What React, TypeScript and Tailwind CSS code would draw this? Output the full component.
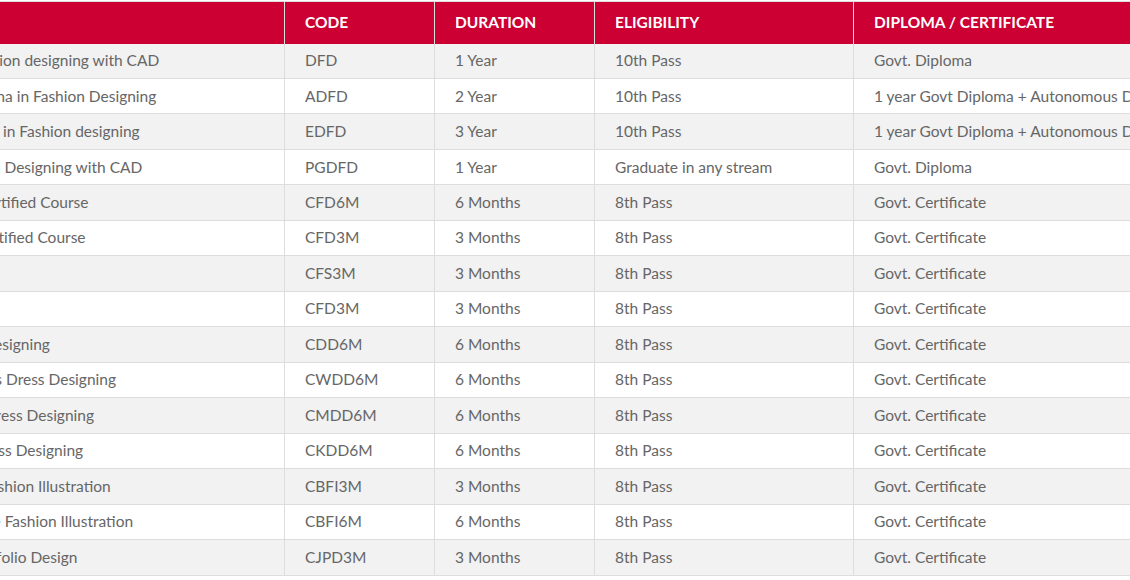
import React from "react";

type Row = {
  prefix: string;
  rest: string;
  start: string;
  code: string;
  duration: string;
  eligibility: string;
  diploma: string;
};

const rows: Row[] = [
  { prefix: "Diploma in Fashi", rest: "on designing with CAD", start: "w-[3px]", code: "DFD", duration: "1 Year", eligibility: "10th Pass", diploma: "Govt. Diploma" },
  { prefix: "Advance Diplom", rest: "a in Fashion Designing", start: "w-[5px]", code: "ADFD", duration: "2 Year", eligibility: "10th Pass", diploma: "1 year Govt Diploma + Autonomous Diploma" },
  { prefix: "Expert Diploma ", rest: "in Fashion designing", start: "w-[3px]", code: "EDFD", duration: "3 Year", eligibility: "10th Pass", diploma: "1 year Govt Diploma + Autonomous Diploma" },
  { prefix: "PG Diploma in Fashion ", rest: "Designing with CAD", start: "w-[4.5px]", code: "PGDFD", duration: "1 Year", eligibility: "Graduate in any stream", diploma: "Govt. Diploma" },
  { prefix: "Fashion Designing Cer", rest: "tified Course", start: "w-[1px]", code: "CFD6M", duration: "6 Months", eligibility: "8th Pass", diploma: "Govt. Certificate" },
  { prefix: "Fashion Design Cert", rest: "ified Course", start: "w-[4px]", code: "CFD3M", duration: "3 Months", eligibility: "8th Pass", diploma: "Govt. Certificate" },
  { prefix: "Certificate in Stitching", rest: "", start: "w-[0px]", code: "CFS3M", duration: "3 Months", eligibility: "8th Pass", diploma: "Govt. Certificate" },
  { prefix: "Certificate in Fashion", rest: "", start: "w-[0px]", code: "CFD3M", duration: "3 Months", eligibility: "8th Pass", diploma: "Govt. Certificate" },
  { prefix: "Certificate in Dress De", rest: "signing", start: "w-[2.3px]", code: "CDD6M", duration: "6 Months", eligibility: "8th Pass", diploma: "Govt. Certificate" },
  { prefix: "Certificate in Women's ", rest: "Dress Designing", start: "w-[6px]", code: "CWDD6M", duration: "6 Months", eligibility: "8th Pass", diploma: "Govt. Certificate" },
  { prefix: "Certificate in Men's Dr", rest: "ess Designing", start: "w-[1px]", code: "CMDD6M", duration: "6 Months", eligibility: "8th Pass", diploma: "Govt. Certificate" },
  { prefix: "Certificate in Kid's Dres", rest: "s Designing", start: "w-[5px]", code: "CKDD6M", duration: "6 Months", eligibility: "8th Pass", diploma: "Govt. Certificate" },
  { prefix: "Certificate in Basic Fas", rest: "hion Illustration", start: "w-[4.3px]", code: "CBFI3M", duration: "3 Months", eligibility: "8th Pass", diploma: "Govt. Certificate" },
  { prefix: "Certificate in Advance ", rest: "Fashion Illustration", start: "w-[4.7px]", code: "CBFI6M", duration: "6 Months", eligibility: "8th Pass", diploma: "Govt. Certificate" },
  { prefix: "Certificate in Jewellery Portf", rest: "olio Design", start: "w-[1.5px]", code: "CJPD3M", duration: "3 Months", eligibility: "8th Pass", diploma: "Govt. Certificate" },
];

export default function App() {
  return (
    <div
      className="w-[1130px] h-[580px] overflow-hidden bg-white pt-px"
      style={{ fontFamily: "Lato, 'Noto Sans', sans-serif" }}
    >
      <div className="border-t border-[#dddddd]">
        {/* header */}
        <div className="flex h-[41.5px] bg-[#cc0033] text-white font-bold text-[15.5px] whitespace-nowrap">
          <div className="w-[285px] shrink-0 border-r border-[#dddddd]" />
          <div className="w-[150px] shrink-0 border-r border-[#dddddd] pl-5 pb-px flex items-center">CODE</div>
          <div className="w-[160px] shrink-0 border-r border-[#dddddd] pl-5 pb-px flex items-center">DURATION</div>
          <div className="w-[259px] shrink-0 border-r border-[#dddddd] pl-5 pb-px flex items-center">ELIGIBILITY</div>
          <div className="flex-1 pl-5 pb-px flex items-center">DIPLOMA / CERTIFICATE</div>
        </div>
        {/* body */}
        {rows.map((r, i) => (
          <div
            key={i}
            className={`flex h-[35.47px] border-b border-[#dddddd] text-[15.5px] text-[#666666] whitespace-nowrap ${
              i % 2 === 0 ? "bg-[#f2f2f2]" : "bg-white"
            }`}
          >
            <div className="w-[285px] shrink-0 border-r border-[#dddddd] overflow-hidden flex items-center">
              <span className={`${r.start} shrink-0 flex justify-end`}>
                <span className="shrink-0 whitespace-pre">{r.prefix}</span>
              </span>
              <span className="whitespace-pre">{r.rest}</span>
            </div>
            <div className="w-[150px] shrink-0 border-r border-[#dddddd] pl-5 flex items-center">{r.code}</div>
            <div className="w-[160px] shrink-0 border-r border-[#dddddd] pl-5 flex items-center">{r.duration}</div>
            <div className="w-[259px] shrink-0 border-r border-[#dddddd] pl-5 flex items-center">{r.eligibility}</div>
            <div className="flex-1 pl-5 flex items-center">{r.diploma}</div>
          </div>
        ))}
      </div>
    </div>
  );
}
